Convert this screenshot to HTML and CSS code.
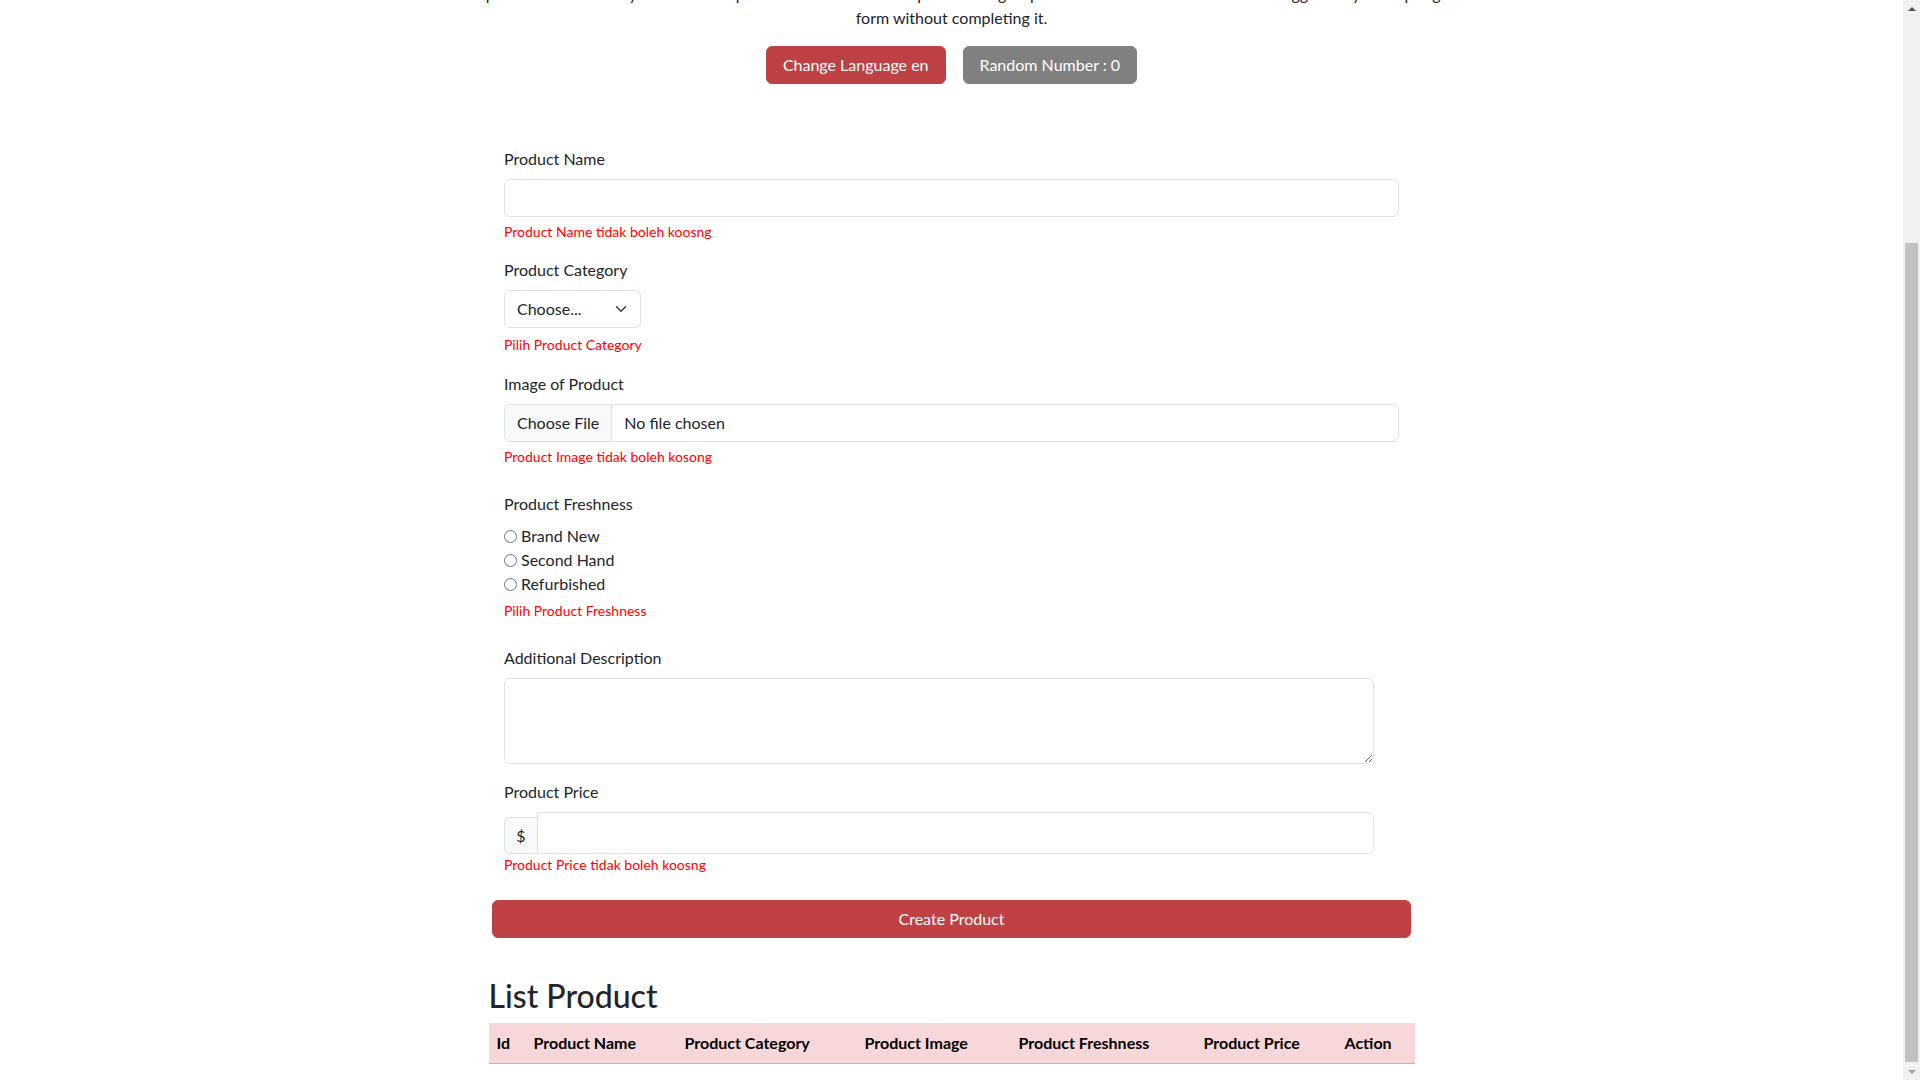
FILE: index.html
```html
<!DOCTYPE html>
<html lang="en">
<head>
<meta charset="utf-8">
<title>Create Product</title>
<link rel="stylesheet" href="styles.css">
</head>
<body>
<header class="intro">
  <h1 class="intro-title">Create Product</h1>
  <p class="intro-text">Below is an example form built entirely with Bootstrap’s form controls. Each required form group has a validation state that can be triggered by attempting to submit the<br>form without completing it.</p>
  <div class="intro-actions" id="actions">
    <button type="button" class="btn btn-red btn-wide">Change Language en</button>
    <button type="button" class="btn btn-grey btn-wide">Random Number : 0</button>
  </div>
</header>

<main class="page">
  <form class="product-form">
    <div class="field">
      <label class="field-label" for="productName">Product Name</label>
      <input class="text-input" id="productName" type="text">
      <div class="error">Product Name tidak boleh koosng</div>
    </div>

    <div class="field field-select">
      <label class="field-label" for="productCategory">Product Category</label>
      <div class="select-wrap">
        <select class="select" id="productCategory">
          <option>Choose...</option>
        </select>
        <svg class="select-chevron" width="16" height="12" viewBox="0 0 16 16" aria-hidden="true"><path d="M2 5l6 6 6-6" fill="none" stroke="#343a40" stroke-width="2" stroke-linecap="round" stroke-linejoin="round"/></svg>
      </div>
      <div class="error">Pilih Product Category</div>
    </div>

    <div class="field field-spaced">
      <span class="field-label">Image of Product</span>
      <label class="file-input">
        <span class="file-btn">Choose File</span>
        <span class="file-name">No file chosen</span>
      </label>
      <div class="error">Product Image tidak boleh kosong</div>
    </div>

    <div class="field field-spaced">
      <span class="field-label">Product Freshness</span>
      <label class="radio-row"><input type="radio" name="fresh"> Brand New</label>
      <label class="radio-row"><input type="radio" name="fresh"> Second Hand</label>
      <label class="radio-row"><input type="radio" name="fresh"> Refurbished</label>
      <div class="error">Pilih Product Freshness</div>
    </div>

    <div class="field">
      <label class="field-label" for="desc">Additional Description</label>
      <textarea class="textarea" id="desc" rows="3"></textarea>
    </div>

    <div class="field field-last">
      <label class="field-label" for="price">Product Price</label>
      <div class="price-group">
        <span class="price-addon">$</span>
        <input class="price-input" id="price" type="text">
      </div>
      <div class="error error-tight">Product Price tidak boleh koosng</div>
    </div>

    <button type="button" class="btn btn-red btn-block">Create Product</button>
  </form>

  <section class="list">
    <h2 class="list-title">List Product</h2>
    <table class="table">
      <colgroup>
        <col class="c-id"><col class="c-name"><col class="c-cat"><col class="c-img"><col class="c-fresh"><col class="c-price"><col class="c-action">
      </colgroup>
      <thead>
        <tr>
          <th>Id</th>
          <th>Product Name</th>
          <th>Product Category</th>
          <th>Product Image</th>
          <th>Product Freshness</th>
          <th>Product Price</th>
          <th>Action</th>
        </tr>
      </thead>
      <tbody></tbody>
    </table>
  </section>
</main>

<aside class="scrollbar" aria-hidden="true">
  <div class="sb-btn"><span class="sb-arrow-up"></span></div>
  <div class="sb-track"><div class="sb-thumb"></div></div>
  <div class="sb-btn"><span class="sb-arrow-down"></span></div>
</aside>
<script src="script.js"></script>
</body>
</html>
```

FILE: styles.css
```css
*, *::before, *::after { box-sizing: border-box; }

html {
  font-size: 16px;
  scrollbar-width: none;
}

body {
  margin: 0;
  padding-right: 17px;
  font-family: Lato, "Liberation Sans", sans-serif;
  font-size: 16px;
  line-height: 1.5;
  color: #212529;
  background: #fff;
}

/* ---------- window scrollbar (drawn) ---------- */
.scrollbar {
  position: fixed;
  top: 0;
  right: 0;
  width: 17px;
  height: 100vh;
  display: flex;
  flex-direction: column;
  background: #f1f1f1;
}
.sb-btn {
  height: 17px;
  display: flex;
  align-items: center;
  justify-content: center;
}
.sb-arrow-up {
  width: 0;
  height: 0;
  border-left: 4px solid transparent;
  border-right: 4px solid transparent;
  border-bottom: 4px solid #505050;
}
.sb-arrow-down {
  width: 0;
  height: 0;
  border-left: 4px solid transparent;
  border-right: 4px solid transparent;
  border-top: 4px solid #a3a3a3;
}
.sb-track {
  flex: 1;
  padding: 226px 2px 0;
}
.sb-thumb {
  height: 819px;
  background: #c1c1c1;
}

/* ---------- intro ---------- */
.intro {
  max-width: 1320px;
  margin: 0 auto;
  padding-top: 217px;
  text-align: center;
}
.intro-title {
  margin: 0 0 16px;
  font-size: 40px;
  line-height: 48px;
  font-weight: 500;
}
.intro-text {
  margin: 0 0 16px;
  white-space: nowrap;
}
.intro-actions {
  display: flex;
  justify-content: center;
  gap: 17px;
}

/* ---------- buttons ---------- */
.btn {
  display: inline-block;
  padding: 6px 12px;
  font-family: inherit;
  font-size: 16px;
  line-height: 24px;
  color: #fff;
  border: 1px solid transparent;
  border-radius: 6px;
  cursor: pointer;
}
.btn-wide { padding: 6px 16px; }
.btn-red { background: #be4143; border-color: #be4143; }
.btn-grey { background: #808080; border-color: #808080; }
.btn-block {
  display: block;
  width: 100%;
  height: 38px;
  margin-top: 25px;
  padding: 0 12px;
  line-height: 36px;
}

/* ---------- page ---------- */
.page {
  width: 926px;
  margin: 0 auto;
  padding-bottom: 18px;
}

.product-form {
  margin: 63px 3.5px 0;
}

.field {
  padding: 0 12px;
  margin-bottom: 16px;
}
.field-select { margin-bottom: 17px; }
.field-spaced { margin-bottom: 25px; }
.field-last { margin-bottom: 0; }

.field-label {
  display: block;
  margin-bottom: 8px;
}

.text-input {
  display: block;
  width: 100%;
  height: 38px;
  padding: 6px 12px;
  font: inherit;
  color: #212529;
  background: #fff;
  border: 1px solid #dee2e6;
  border-radius: 6px;
}

.error {
  margin-top: 4px;
  font-size: 14px;
  line-height: 21px;
  color: #ff0000;
}
.field-select .error { margin-top: 6px; }
.error-tight { margin-top: 0; }

/* select */
.select-wrap {
  position: relative;
  width: 137px;
}
.select {
  display: block;
  width: 137px;
  height: 38px;
  padding: 0 36px 0 12px;
  font: inherit;
  color: #212529;
  background: #fff;
  border: 1px solid #dee2e6;
  border-radius: 6px;
  appearance: none;
  -webkit-appearance: none;
}
.select-chevron {
  position: absolute;
  right: 12px;
  top: 13px;
  pointer-events: none;
}

/* file */
.file-input {
  display: flex;
  align-items: center;
  height: 38px;
  border: 1px solid #dee2e6;
  border-radius: 6px;
  overflow: hidden;
  background: #fff;
}
.file-btn {
  display: flex;
  align-items: center;
  height: 100%;
  padding: 0 12px;
  background: #f8f9fa;
  border-right: 1px solid #dee2e6;
}
.file-name { padding-left: 12px; }

/* radios */
.radio-row {
  display: flex;
  align-items: center;
  height: 24px;
}
.radio-row input {
  width: 13px;
  height: 13px;
  margin: 0 4px 0 0;
}

/* textarea */
.textarea {
  display: block;
  width: 870px;
  height: 86px;
  padding: 6px 12px;
  font: inherit;
  border: 1px solid #dee2e6;
  border-radius: 6px;
  resize: vertical;
}

/* price */
.price-group {
  display: flex;
  align-items: flex-end;
  width: 870px;
}
.price-addon {
  display: flex;
  align-items: center;
  justify-content: center;
  width: 33px;
  height: 37px;
  background: #f8f9fa;
  border: 1px solid #dee2e6;
  border-right: 0;
  border-radius: 6px 0 0 6px;
}
.price-input {
  flex: 1;
  height: 42px;
  padding: 6px 12px;
  font: inherit;
  border: 1px solid #dee2e6;
  border-radius: 0 6px 6px 0;
}

/* list */
.list { margin-top: 39px; }
.list-title {
  margin: 0 0 8px;
  font-size: 32px;
  line-height: 1.2;
  font-weight: 500;
}

.table {
  width: 926px;
  table-layout: fixed;
  border-collapse: collapse;
}
.c-id { width: 37px; }
.c-name { width: 151px; }
.c-cat { width: 180px; }
.c-img { width: 154px; }
.c-fresh { width: 185px; }
.c-price { width: 141px; }
.c-action { width: 78px; }

.table th {
  padding: 8px;
  text-align: left;
  font-weight: 700;
  line-height: 24px;
  color: #000;
  background: #f8d7da;
  border-bottom: 1px solid #c6b1b3;
  white-space: nowrap;
}
```

FILE: script.js
```js
(function () {
  function place() {
    var a = document.getElementById('actions');
    if (!a) return;
    var y = a.getBoundingClientRect().top + window.scrollY - 46;
    window.scrollTo(0, y);
  }
  place();
  window.addEventListener('load', place);
})();
```
